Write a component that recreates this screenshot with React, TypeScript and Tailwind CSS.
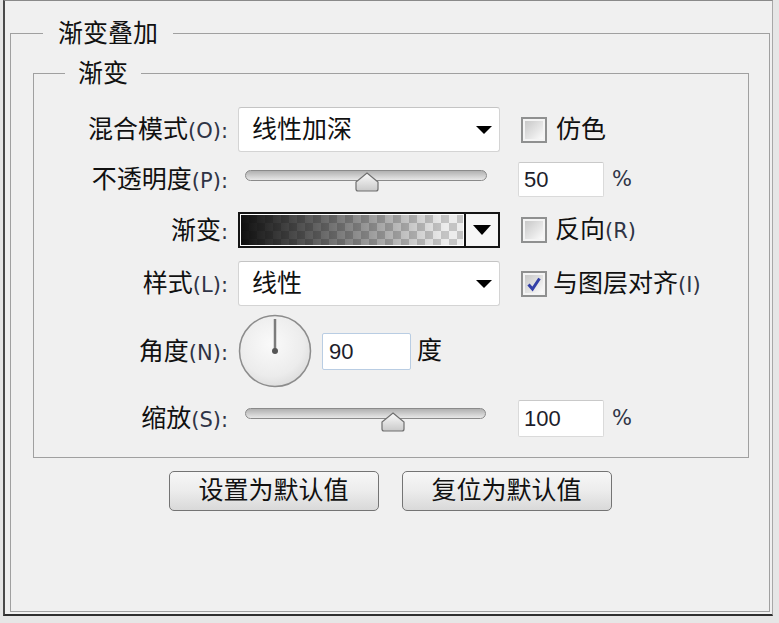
import React from 'react';

const cjk = "font-['Liberation_Sans','Noto_Sans_CJK_SC',sans-serif]";
const latin = "font-['DejaVu_Sans','Noto_Sans_CJK_SC',sans-serif] text-[21px] text-[#2f3446]";

function Label({ text, hotkey }: { text: string; hotkey?: string }) {
  return (
    <div className="w-[194px] shrink-0 text-right text-[25px] leading-none text-[#111]">
      {text}
      {hotkey && <span className={latin}>({hotkey})</span>}
      <span className={latin}>:</span>
    </div>
  );
}

function DropArrow({ big }: { big?: boolean }) {
  return big ? (
    <svg width="18" height="10" viewBox="0 0 18 10">
      <polygon points="0,0 18,0 9,10" fill="#000" />
    </svg>
  ) : (
    <svg width="16" height="8" viewBox="0 0 16 8">
      <polygon points="0,0 16,0 8,8" fill="#000" />
    </svg>
  );
}

function Select({ value }: { value: string }) {
  return (
    <div className="flex h-[45px] w-[262px] shrink-0 items-center justify-between rounded-[3px] border border-[#d4d4d4] border-t-[#c4c4c4] bg-white pl-[13px] pr-[7px] text-[25px] text-[#111]">
      <span>{value}</span>
      <DropArrow />
    </div>
  );
}

function Checkbox({ checked }: { checked?: boolean }) {
  return (
    <div className="h-[26px] w-[26px] shrink-0 border-2 border-[#8f9090] bg-[#f4f4f4] p-[2px]">
      <div className="flex h-full w-full items-center justify-center bg-gradient-to-br from-[#c8c8c8] to-[#fbfbfb]">
        {checked && (
          <svg width="16" height="16" viewBox="0 0 16 16">
            <path d="M2.5 8.5 L6.5 13 L13.5 2.5" fill="none" stroke="#3340a8" strokeWidth="3" />
          </svg>
        )}
      </div>
    </div>
  );
}

function Thumb() {
  return (
    <svg width="24" height="20" viewBox="0 0 24 20">
      <defs>
        <linearGradient id="thumbFill" x1="0" y1="0" x2="0" y2="1">
          <stop offset="0" stopColor="#fbfbfb" />
          <stop offset="1" stopColor="#c9c9c9" />
        </linearGradient>
      </defs>
      <path
        d="M12 1 L23 10 L23 17 Q23 19 21 19 L3 19 Q1 19 1 17 L1 10 Z"
        fill="url(#thumbFill)"
        stroke="#6f6f6f"
        strokeWidth="1.2"
      />
    </svg>
  );
}

function Track() {
  return (
    <div className="h-[11px] w-full rounded-full border border-[#8a8a8a] bg-gradient-to-b from-[#b1b1b1] to-[#e8e8e8]" />
  );
}

function NumberBox({ value, tall }: { value: string; tall?: boolean }) {
  return (
    <div
      className={`flex w-[86px] shrink-0 items-center rounded-[2px] border border-[#dadada] border-t-[#c9c9c9] bg-white pl-[5px] text-[22px] text-[#1d1d2b] ${
        tall ? 'h-[37px]' : 'h-[35px]'
      }`}
    >
      {value}
    </div>
  );
}

function Dial() {
  return (
    <svg width="74" height="74" viewBox="0 0 74 74" className="shrink-0">
      <defs>
        <radialGradient id="dialFill" cx="0.45" cy="0.4" r="0.65">
          <stop offset="0" stopColor="#fafafa" />
          <stop offset="0.7" stopColor="#ececec" />
          <stop offset="1" stopColor="#dadada" />
        </radialGradient>
      </defs>
      <circle cx="37" cy="37" r="35.5" fill="url(#dialFill)" stroke="#8c8c8c" strokeWidth="1.5" />
      <line x1="37" y1="5" x2="37" y2="37" stroke="#7c7c7c" strokeWidth="2.5" />
      <circle cx="37" cy="37" r="3" fill="#555" />
    </svg>
  );
}

function GradientPicker() {
  return (
    <div className="flex h-[36px] w-[262px] shrink-0 border-2 border-[#151515] bg-white">
      <div className="m-[1px] flex-1 bg-[linear-gradient(to_right,rgba(10,10,10,0.97),rgba(10,10,10,0)_92%),repeating-conic-gradient(#c4c4c4_0%_25%,#ececec_0%_50%)] bg-[length:100%_100%,16px_16px]" />
      <div className="flex w-[34px] items-center justify-center border-l-2 border-[#151515] bg-[#f6f6f6]">
        <DropArrow big />
      </div>
    </div>
  );
}

function Button({ text }: { text: string }) {
  return (
    <div className="flex h-[40px] w-[210px] items-center justify-center rounded-[5px] border border-[#747474] bg-gradient-to-b from-[#f7f7f7] via-[#ececec] to-[#d9d9d9] text-[25px] text-[#111]">
      {text}
    </div>
  );
}

export default function App() {
  return (
    <div className={`h-[623px] w-[779px] overflow-hidden bg-[#e6e6e6] ${cjk}`}>
      <div className="ml-[3px] flex h-[616px] w-[770px] flex-col border-b-2 border-l-2 border-r border-t border-b-[#2e2e2e] border-l-[#4a4a4a] border-r-[#a8a8a8] border-t-[#8a8a8a] bg-[#f0f0f0]">
        <fieldset className="mb-[2px] ml-[5px] mr-[2px] mt-[17px] h-[594px] min-w-0 border border-[#a0a0a0]">
          <legend className="ml-[32px] px-[15px] text-[25px] leading-[30px] text-[#111]">渐变叠加</legend>

          <fieldset className="ml-[22px] mt-[10px] w-[716px] min-w-0 border border-[#a0a0a0] pb-[20px] pt-[19px]">
            <legend className="ml-[31px] px-[13px] text-[25px] leading-[30px] text-[#111]">渐变</legend>

            {/* 混合模式 */}
            <div className="flex h-[45px] items-center">
              <Label text="混合模式" hotkey="O" />
              <div className="ml-[10px]">
                <Select value="线性加深" />
              </div>
              <div className="ml-[21px] flex items-center gap-[9px] text-[25px] text-[#111]">
                <Checkbox />
                <span>仿色</span>
              </div>
            </div>

            {/* 不透明度 */}
            <div className="mt-[10px] flex h-[35px] items-center">
              <Label text="不透明度" hotkey="P" />
              <div className="relative ml-[17px] h-[35px] w-[242px] shrink-0 pt-[8px]">
                <Track />
                <div className="absolute left-[110px] top-[10px]">
                  <Thumb />
                </div>
              </div>
              <div className="ml-[31px]">
                <NumberBox value="50" />
              </div>
              <span className="ml-[8px] font-['DejaVu_Sans',sans-serif] text-[21px] text-[#2f3446]">%</span>
            </div>

            {/* 渐变 */}
            <div className="mt-[15px] flex h-[36px] items-center">
              <Label text="渐变" />
              <div className="ml-[10px]">
                <GradientPicker />
              </div>
              <div className="ml-[21px] flex items-center gap-[8px] text-[25px] text-[#111]">
                <Checkbox />
                <span>
                  反向<span className={latin}>(R)</span>
                </span>
              </div>
            </div>

            {/* 样式 */}
            <div className="mt-[13px] flex h-[45px] items-center">
              <Label text="样式" hotkey="L" />
              <div className="ml-[10px]">
                <Select value="线性" />
              </div>
              <div className="ml-[21px] flex items-center gap-[6px] text-[25px] text-[#111]">
                <Checkbox checked />
                <span>
                  与图层对齐<span className={latin}>(I)</span>
                </span>
              </div>
            </div>

            {/* 角度 */}
            <div className="mt-[9px] flex h-[72px] items-center">
              <Label text="角度" hotkey="N" />
              <div className="ml-[10px] flex items-center">
                <Dial />
                <div className="ml-[10px]">
                  <div className="flex h-[37px] w-[89px] items-center rounded-[2px] border border-[#b9cde3] bg-white pl-[6px] text-[22px] text-[#1d1d2b]">
                    90
                  </div>
                </div>
                <span className="ml-[6px] text-[25px] text-[#111]">度</span>
              </div>
            </div>

            {/* 缩放 */}
            <div className="mt-[13px] flex h-[37px] items-center">
              <Label text="缩放" hotkey="S" />
              <div className="relative ml-[17px] h-[37px] w-[241px] shrink-0 pt-[8px]">
                <Track />
                <div className="absolute left-[136px] top-[12px]">
                  <Thumb />
                </div>
              </div>
              <div className="ml-[32px]">
                <NumberBox value="100" tall />
              </div>
              <span className="ml-[8px] font-['DejaVu_Sans',sans-serif] text-[21px] text-[#2f3446]">%</span>
            </div>
          </fieldset>

          <div className="mt-[13px] flex justify-center gap-[23px]">
            <Button text="设置为默认值" />
            <Button text="复位为默认值" />
          </div>
        </fieldset>
      </div>
    </div>
  );
}
